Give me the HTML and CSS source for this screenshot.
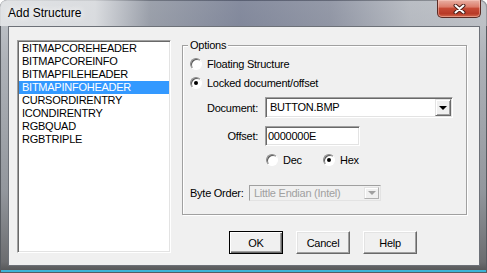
FILE: index.html
```html
<!DOCTYPE html>
<html>
<head>
  <title>Add Structure</title>
  <link rel="stylesheet" href="styles.css">
</head>
<body>
  <div class="window">
    <div class="titlebar">
      <span class="title">Add Structure</span>
      <div class="close-btn">
        <svg width="13" height="10" viewBox="0 0 13 10">
          <path d="M2.5 1.5 L10.5 8.5 M10.5 1.5 L2.5 8.5" stroke="#4a1e18" stroke-width="4" stroke-linecap="round"/>
          <path d="M2.5 1.5 L10.5 8.5 M10.5 1.5 L2.5 8.5" stroke="#fff" stroke-width="2" stroke-linecap="round"/>
        </svg>
      </div>
    </div>

    <div class="client">
      <div class="listbox sunken">
        <div class="item">BITMAPCOREHEADER</div>
        <div class="item">BITMAPCOREINFO</div>
        <div class="item">BITMAPFILEHEADER</div>
        <div class="item selected">BITMAPINFOHEADER</div>
        <div class="item">CURSORDIRENTRY</div>
        <div class="item">ICONDIRENTRY</div>
        <div class="item">RGBQUAD</div>
        <div class="item">RGBTRIPLE</div>
      </div>

      <div class="right-col">
        <fieldset class="group">
          <legend>Options</legend>
          <div class="radio-row">
            <span class="radio"></span>Floating Structure
          </div>
          <div class="radio-row gap-sm">
            <span class="radio checked"></span>Locked document/offset
          </div>
          <div class="field-row doc-row">
            <span class="field-label">Document:</span>
            <div class="combo sunken">
              <span class="combo-text">BUTTON.BMP</span>
              <span class="drop raised"><span class="arrow"></span></span>
            </div>
          </div>
          <div class="field-row offset-row">
            <span class="field-label">Offset:</span>
            <div class="textbox sunken">0000000E</div>
          </div>
          <div class="base-row">
            <div class="radio-opt"><span class="radio"></span>Dec</div>
            <div class="radio-opt"><span class="radio checked"></span>Hex</div>
          </div>
          <div class="byte-row">
            <span class="byte-label">Byte Order:</span>
            <div class="combo small disabled">
              <span class="combo-text">Little Endian (Intel)</span>
              <span class="drop raised"><span class="arrow"></span></span>
            </div>
          </div>
        </fieldset>

        <div class="buttons">
          <button class="btn default">OK</button>
          <button class="btn">Cancel</button>
          <button class="btn">Help</button>
        </div>
      </div>
    </div>
  </div>
</body>
</html>
```

FILE: styles.css
```css
* {
  box-sizing: border-box;
}

body {
  margin: 0;
  background: #fff;
}

.window {
  width: 487px;
  height: 273px;
  border-radius: 7px 7px 0 0;
  overflow: hidden;
  background: linear-gradient(to bottom, #c4c8cd 0, #aeb2b8 60px, #93979d 190px, #6c6d70 262px, #505152 273px);
  box-shadow: inset 0 0 0 1px #575b61, inset 0 -1px 0 #3d3d3d, inset 0 -3px 0 #3db3d6;
  font-family: "Liberation Sans", Arial, sans-serif;
  font-size: 11px;
  letter-spacing: -0.25px;
  color: #000;
}

.titlebar {
  height: 26px;
  display: flex;
  align-items: flex-start;
  padding: 0 6px 0 8px;
  background: linear-gradient(to right, rgba(228, 230, 232, 0.9) 0, rgba(222, 224, 227, 0.85) 95px, rgba(130, 136, 150, 0.6) 150px, rgba(92, 100, 128, 0.6) 240px, rgba(110, 116, 138, 0.55) 330px, rgba(176, 180, 188, 0.5) 410px, rgba(190, 193, 198, 0.6) 487px);
}

.title {
  font-size: 12px;
  letter-spacing: 0;
  line-height: 27px;
  text-shadow: 0 0 6px #fff, 0 0 10px #fff;
}

.close-btn {
  margin-left: auto;
  width: 44px;
  height: 18px;
  display: flex;
  align-items: center;
  justify-content: center;
  border: 1px solid #5b2b24;
  border-top: none;
  border-radius: 0 0 5px 5px;
  background: linear-gradient(to bottom, #e9b0a4 0, #dc7d6b 40%, #c64a35 50%, #b83a27 80%, #d2684d 100%);
  box-shadow: inset 0 0 0 1px rgba(255, 210, 200, 0.45);
}

.client {
  height: 240px;
  margin: 0 7px 0 8px;
  background: #f0f0f0;
  border: 1px solid #6d7178;
  display: flex;
  align-items: flex-start;
  gap: 11px;
  padding: 13px 0 0 8px;
}

.sunken {
  border: 1px solid;
  border-color: #a0a0a0 #fff #fff #a0a0a0;
  box-shadow: inset 1px 1px 0 #696969, inset -1px -1px 0 #e3e3e3;
}

.raised {
  border: 1px solid;
  border-color: #e3e3e3 #696969 #696969 #e3e3e3;
  box-shadow: inset 1px 1px 0 #fff, inset -1px -1px 0 #a0a0a0;
  background: #f0f0f0;
}

.listbox {
  width: 154px;
  height: 213px;
  background: #fff;
  padding: 1px;
}

.item {
  height: 13px;
  line-height: 13px;
  padding-left: 3px;
  white-space: nowrap;
}

.item.selected {
  background: #3399ff;
  color: #fff;
}

.right-col {
  width: 285px;
  margin-top: -1px;
}

.group {
  margin: 0;
  min-width: 0;
  height: 176px;
  padding: 4px 0 0 7px;
  border: 1px solid #a0a0a0;
  box-shadow: 1px 1px 0 #fff, inset 1px 1px 0 #fff;
}

.group legend {
  margin-left: -2px;
  padding: 0 2px;
  line-height: 13px;
  background: #f0f0f0;
}

.radio-row {
  display: flex;
  align-items: center;
  height: 16px;
}

.gap-sm {
  margin-top: 3px;
}

.radio {
  width: 12px;
  height: 12px;
  margin-right: 5px;
  border-radius: 50%;
  background: #fff;
  border: 1px solid;
  border-color: #8a8a8a #fff #fff #8a8a8a;
  box-shadow: inset 1px 1px 0 #5a5a5a;
  display: flex;
  align-items: center;
  justify-content: center;
  flex: none;
}

.radio.checked::after {
  content: '';
  width: 4px;
  height: 4px;
  border-radius: 50%;
  background: #000;
}

.field-row {
  display: flex;
  align-items: center;
}

.field-label {
  width: 68px;
  margin-right: 7px;
  text-align: right;
}

.doc-row {
  margin-top: 6px;
}

.offset-row {
  margin-top: 8px;
}

.combo {
  width: 188px;
  height: 21px;
  display: flex;
  padding: 1px;
  background: #fff;
}

.combo-text {
  flex: 1;
  padding-left: 3px;
  line-height: 17px;
  white-space: nowrap;
}

.drop {
  width: 16px;
  display: flex;
  align-items: center;
  justify-content: center;
}

.arrow {
  width: 0;
  height: 0;
  border-left: 4px solid transparent;
  border-right: 4px solid transparent;
  border-top: 4px solid #000;
}

.textbox {
  width: 95px;
  height: 20px;
  background: #fff;
  padding-left: 2px;
  line-height: 18px;
}

.base-row {
  display: flex;
  height: 16px;
  margin-top: 6px;
  padding-left: 76px;
}

.radio-opt {
  display: flex;
  align-items: center;
  width: 57px;
}

.byte-row {
  display: flex;
  align-items: center;
  height: 16px;
  margin-top: 17px;
}

.byte-label {
  width: 59px;
}

.combo.small {
  width: 132px;
  height: 16px;
}

.combo.disabled {
  background: #f0f0f0;
  color: #a0a0a0;
  border: 1px solid;
  border-color: #a0a0a0 #e3e3e3 #e3e3e3 #a0a0a0;
}

.combo.disabled .combo-text {
  line-height: 12px;
}

.combo.disabled .drop {
  width: 15px;
  border-color: #e3e3e3 #b0b0b0 #b0b0b0 #e3e3e3;
  box-shadow: inset 1px 1px 0 #fff;
}

.combo.disabled .arrow {
  border-top-color: #a0a0a0;
}

.buttons {
  display: flex;
  gap: 13px;
  margin-top: 16px;
  padding-left: 47px;
}

.btn {
  width: 54px;
  height: 23px;
  padding: 0;
  font-family: "Liberation Sans", Arial, sans-serif;
  font-size: 11px;
  letter-spacing: -0.25px;
  color: #000;
  background: #f0f0f0;
  border: 1px solid;
  border-color: #fff #696969 #696969 #fff;
  box-shadow: inset -1px -1px 0 #a0a0a0, inset 1px 1px 0 #e3e3e3;
}

.btn.default {
  border-color: #000;
  box-shadow: inset 1px 1px 0 #fff, inset -1px -1px 0 #696969, inset -2px -2px 0 #a0a0a0;
}
```
